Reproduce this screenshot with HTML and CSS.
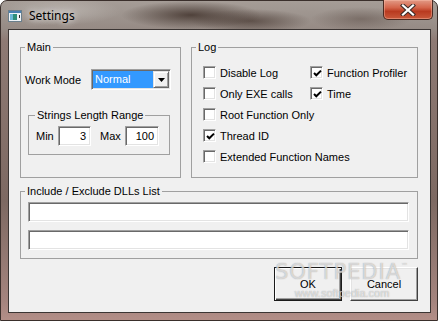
FILE: index.html
```html
<!DOCTYPE html>
<html>
<head>
  <title>Settings</title>
  <link rel="stylesheet" href="styles.css">
</head>
<body>

<div class="window">
  <div class="titlebar">
    <svg class="app-icon" width="14" height="12" viewBox="0 0 14 12">
      <rect x="0.5" y="0.5" width="13" height="11" fill="#eef3f6" stroke="#6b7f8c"/>
      <rect x="1" y="1" width="12" height="2" fill="#4a7fb0"/>
      <rect x="2" y="4" width="7" height="6" fill="#2f8f7a"/>
      <rect x="2" y="4" width="3" height="6" fill="#6bb8d8"/>
      <rect x="11" y="5" width="1" height="3" fill="#2a2a2a"/>
    </svg>
    <span class="title">Settings</span>
    <div class="close-btn">
      <svg width="16" height="12" viewBox="0 0 16 12">
        <path d="M3 1.5 L13 10.5 M13 1.5 L3 10.5" stroke="#3b2b28" stroke-width="4.2" stroke-linecap="square"/>
        <path d="M3 1.5 L13 10.5 M13 1.5 L3 10.5" stroke="#ffffff" stroke-width="2.2" stroke-linecap="square"/>
      </svg>
    </div>
  </div>

  <div class="client">
    <div class="top-row">
      <fieldset class="group main-group">
        <legend>Main</legend>
        <div class="mode-row">
          <span class="mode-label">Work Mode</span>
          <div class="combo">
            <span class="combo-value">Normal</span>
            <span class="combo-btn">
              <svg width="7" height="4" viewBox="0 0 7 4"><path d="M0 0 H7 L3.5 4 Z" fill="#000"/></svg>
            </span>
          </div>
        </div>
        <fieldset class="group range-group">
          <legend>Strings Length Range</legend>
          <div class="range-row">
            <span class="min-label">Min</span>
            <span class="edit num min-edit">3</span>
            <span class="max-label">Max</span>
            <span class="edit num max-edit">100</span>
          </div>
        </fieldset>
      </fieldset>

      <fieldset class="group log-group">
        <legend>Log</legend>
        <div class="log-cols">
          <div class="log-col first">
            <div class="check"><span class="box"></span>Disable Log</div>
            <div class="check"><span class="box"></span>Only EXE calls</div>
            <div class="check"><span class="box"></span>Root Function Only</div>
            <div class="check"><span class="box checked"><svg width="9" height="9" viewBox="0 0 9 9"><path d="M1 4 L3.3 6.3 L8 1.6" fill="none" stroke="#000" stroke-width="2"/></svg></span>Thread ID</div>
            <div class="check"><span class="box"></span>Extended Function Names</div>
          </div>
          <div class="log-col">
            <div class="check"><span class="box checked"><svg width="9" height="9" viewBox="0 0 9 9"><path d="M1 4 L3.3 6.3 L8 1.6" fill="none" stroke="#000" stroke-width="2"/></svg></span>Function Profiler</div>
            <div class="check"><span class="box checked"><svg width="9" height="9" viewBox="0 0 9 9"><path d="M1 4 L3.3 6.3 L8 1.6" fill="none" stroke="#000" stroke-width="2"/></svg></span>Time</div>
          </div>
        </div>
      </fieldset>
    </div>

    <fieldset class="group dll-group">
      <legend>Include / Exclude DLLs List</legend>
      <div class="edit wide first"></div>
      <div class="edit wide"></div>
    </fieldset>

    <div class="buttons">
      <button class="btn default">OK</button>
      <button class="btn">Cancel</button>
    </div>

    <div class="watermark">
      <div class="wm-big">SOFTPEDIA<sup>™</sup></div>
      <div class="wm-small">www.softpedia.com</div>
    </div>
  </div>
</div>

</body>
</html>
```

FILE: styles.css
```css
html, body {
  margin: 0;
  padding: 0;
  width: 438px;
  height: 321px;
  overflow: hidden;
  background: #ffffff;
  font-family: "Liberation Sans", Arial, sans-serif;
  font-size: 11px;
  color: #000;
}

.window {
  box-sizing: border-box;
  width: 438px;
  height: 321px;
  display: flex;
  flex-direction: column;
  border-radius: 7px 7px 0 0;
  border: 1px solid #3a2f2b;
  background:
    radial-gradient(ellipse 70px 14px at 190px 14px, rgba(60, 45, 38, 0.8), transparent),
    radial-gradient(ellipse 60px 12px at 250px 20px, rgba(70, 55, 48, 0.7), transparent),
    radial-gradient(ellipse 50px 12px at 360px 18px, rgba(90, 75, 68, 0.5), transparent),
    radial-gradient(ellipse 60px 14px at 60px 10px, rgba(200, 195, 190, 0.6), transparent),
    linear-gradient(to bottom, #a59d97 0px, #968b85 28px, #8e7a74 40px, #7d6962 200px, #a4847e 300px, #b48f88 321px);
}

.titlebar {
  height: 28px;
  display: flex;
  align-items: center;
  padding-left: 7px;
}

.app-icon {
  margin-top: 1px;
  flex: none;
}

.title {
  margin-left: 7px;
  font-family: "Noto Sans", "Open Sans", sans-serif;
  font-size: 12px;
  color: #000;
  text-shadow: 0 0 6px rgba(255, 255, 255, 0.8), 0 0 10px rgba(255, 255, 255, 0.5);
}

.close-btn {
  margin-left: auto;
  margin-right: 4px;
  align-self: flex-start;
  margin-top: -1px;
  width: 50px;
  height: 20px;
  box-sizing: border-box;
  border: 1px solid #4b2a22;
  border-top: none;
  border-radius: 0 0 5px 5px;
  background: linear-gradient(to bottom, #e29a86 0%, #d4654b 40%, #b93a20 60%, #c9593b 100%);
  box-shadow: inset 0 0 0 1px rgba(255, 200, 180, 0.4);
  display: flex;
  justify-content: center;
  align-items: center;
}

.client {
  position: relative;
  box-sizing: border-box;
  flex: 1;
  margin: 0 6px 7px 7px;
  border: 1px solid #3b3533;
  background: #f0f0f0;
  padding: 11px 12px 0 11px;
}

/* group boxes */

.group {
  margin: 0;
  padding: 0;
  border: 1px solid #a0a0a0;
  min-width: 0;
  box-sizing: border-box;
}

.group legend {
  padding: 0 2px;
  margin-left: 4px;
  line-height: 13px;
}

.top-row {
  display: flex;
  gap: 10px;
  height: 137px;
}

.main-group {
  width: 161px;
  flex: none;
}

.log-group {
  flex: 1;
}

.mode-row {
  display: flex;
  align-items: center;
  margin-top: 15px;
  padding-left: 4px;
}

.mode-label {
  width: 66px;
}

.combo {
  display: flex;
  box-sizing: border-box;
  width: 80px;
  height: 21px;
  padding: 1px;
  background: #fff;
  border: 1px solid;
  border-color: #a0a0a0 #fff #fff #a0a0a0;
  box-shadow: inset 1px 1px #696969, inset -1px -1px #e3e3e3;
}

.combo-value {
  flex: 1;
  background: #3399ff;
  color: #fff;
  padding-left: 2px;
  line-height: 17px;
}

.combo-btn {
  box-sizing: border-box;
  width: 16px;
  display: flex;
  justify-content: center;
  align-items: center;
  background: #f0f0f0;
  border: 1px solid;
  border-color: #e3e3e3 #696969 #696969 #e3e3e3;
  box-shadow: inset 1px 1px #fff, inset -1px -1px #a0a0a0;
}

.range-group {
  margin: 19px 0 0 7px;
  width: 142px;
  padding-bottom: 8px;
}

.range-group legend {
  margin-left: 6px;
}

.range-row {
  display: flex;
  align-items: center;
  margin-top: 4px;
  padding-left: 7px;
}

.min-label {
  width: 22px;
}

.max-label {
  width: 25px;
  margin-left: 9px;
}

.edit {
  display: block;
  box-sizing: border-box;
  height: 20px;
  background: #fff;
  border: 1px solid;
  border-color: #a0a0a0 #fff #fff #a0a0a0;
  box-shadow: inset 1px 1px #696969, inset -1px -1px #e3e3e3;
}

.edit.num {
  text-align: right;
  padding-right: 4px;
  line-height: 18px;
}

.min-edit {
  width: 33px;
}

.max-edit {
  width: 34px;
}

/* log checkboxes */

.log-cols {
  display: flex;
  margin-top: 8px;
  padding-left: 11px;
}

.log-col.first {
  width: 107px;
  flex: none;
}

.check {
  display: flex;
  align-items: center;
  gap: 4px;
  height: 21px;
  white-space: nowrap;
}

.box {
  box-sizing: border-box;
  width: 13px;
  height: 13px;
  flex: none;
  background: #fff;
  border: 1px solid;
  border-color: #a0a0a0 #fff #fff #a0a0a0;
  box-shadow: inset 1px 1px #696969, inset -1px -1px #e3e3e3;
  display: flex;
  justify-content: center;
  align-items: center;
}

.box svg {
  margin: 1px 0 0 1px;
}

/* dll list */

.dll-group {
  margin-top: 7px;
  padding-bottom: 8px;
}

.edit.wide {
  margin: 8px 8px 0 7px;
}

.edit.wide.first {
  margin-top: 4px;
}

/* buttons */

.buttons {
  display: flex;
  justify-content: flex-end;
  gap: 8px;
  margin-top: 8px;
}

.btn {
  box-sizing: border-box;
  width: 68px;
  height: 34px;
  padding: 0;
  font-family: "Liberation Sans", Arial, sans-serif;
  font-size: 11px;
  color: #000;
  background: #f0f0f0;
  border: 1px solid;
  border-color: #fff #404040 #404040 #fff;
  box-shadow: inset -1px -1px #a0a0a0, inset 1px 1px #e3e3e3;
}

.btn.default {
  border-color: #1a1a1a;
  box-shadow: inset 1px 1px #fff, inset -1px -1px #404040, inset -2px -2px #a0a0a0;
}

.watermark {
  position: absolute;
  left: 266px;
  top: 230px;
  pointer-events: none;
  text-align: center;
}

.wm-big {
  font-family: "DejaVu Sans", sans-serif;
  font-size: 21px;
  letter-spacing: 1px;
  color: rgba(255, 255, 255, 0.6);
  text-shadow: 0 0 1px rgba(110, 110, 110, 0.7);
}

.wm-big sup {
  font-size: 7px;
  vertical-align: 11px;
}

.wm-small {
  margin-top: 3px;
  font-size: 11px;
  color: rgba(255, 255, 255, 0.6);
  text-shadow: 0 0 1px rgba(110, 110, 110, 0.7);
}
```
